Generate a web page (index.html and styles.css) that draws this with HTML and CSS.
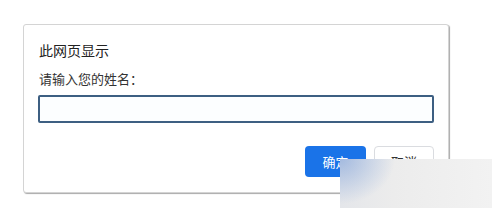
FILE: index.html
```html
<!DOCTYPE html>
<html lang="zh">
<head>
<meta charset="utf-8">
<link rel="stylesheet" href="styles.css">
</head>
<body>
<div class="dialog">
  <div class="title">此网页显示</div>
  <div class="label">请输入您的姓名：</div>
  <div class="input"></div>
  <div class="actions">
    <button class="btn primary">确定</button>
    <button class="btn secondary">取消</button>
  </div>
</div>
<div class="veil"></div>
</body>
</html>
```

FILE: styles.css
```css
html, body {
  margin: 0;
  padding: 0;
  background: #ffffff;
}
body {
  width: 492px;
  height: 215px;
  position: relative;
  overflow: hidden;
  font-family: "Noto Sans CJK SC", "Noto Sans", sans-serif;
}
.dialog {
  margin: 24px 0 0 23px;
  width: 426px;
  height: 169px;
  box-sizing: border-box;
  border: 1px solid #d4d4d4;
  border-radius: 3px;
  box-shadow: 1px 1px 1px #a9a9a9;
  padding: 15px 14px 0 14px;
  background: #fff;
  display: flex;
  flex-direction: column;
}
.title {
  font-size: 14px;
  line-height: 20px;
  color: #222;
  padding-left: 1px;
}
.label {
  margin-top: 10px;
  font-size: 13px;
  line-height: 18px;
  color: #333;
  padding-left: 1px;
}
.input {
  margin-top: 7px;
  height: 28px;
  box-sizing: border-box;
  border: 2px solid #3d5f82;
  border-radius: 2px;
  background: #fcfeff;
}
.actions {
  margin-top: 23px;
  display: flex;
  justify-content: flex-end;
  gap: 8px;
}
.btn {
  height: 31px;
  box-sizing: border-box;
  font-family: "Noto Sans CJK SC", sans-serif;
  font-size: 13px;
  border-radius: 4px;
  padding: 0;
}
.primary {
  width: 61px;
  background: #1a73e8;
  border: none;
  color: #fff;
}
.secondary {
  width: 60px;
  background: #fff;
  border: 1px solid #dadce0;
  color: #333;
}
.veil {
  position: absolute;
  left: 340px;
  top: 159px;
  width: 152px;
  height: 49px;
  background:
    radial-gradient(ellipse 55px 45px at 0 0, rgba(110, 150, 215, 0.55), rgba(110, 150, 215, 0) 100%),
    linear-gradient(to right, #e4e6ea 0%, #ececec 35%, #f2f2f2 100%);
}
```
